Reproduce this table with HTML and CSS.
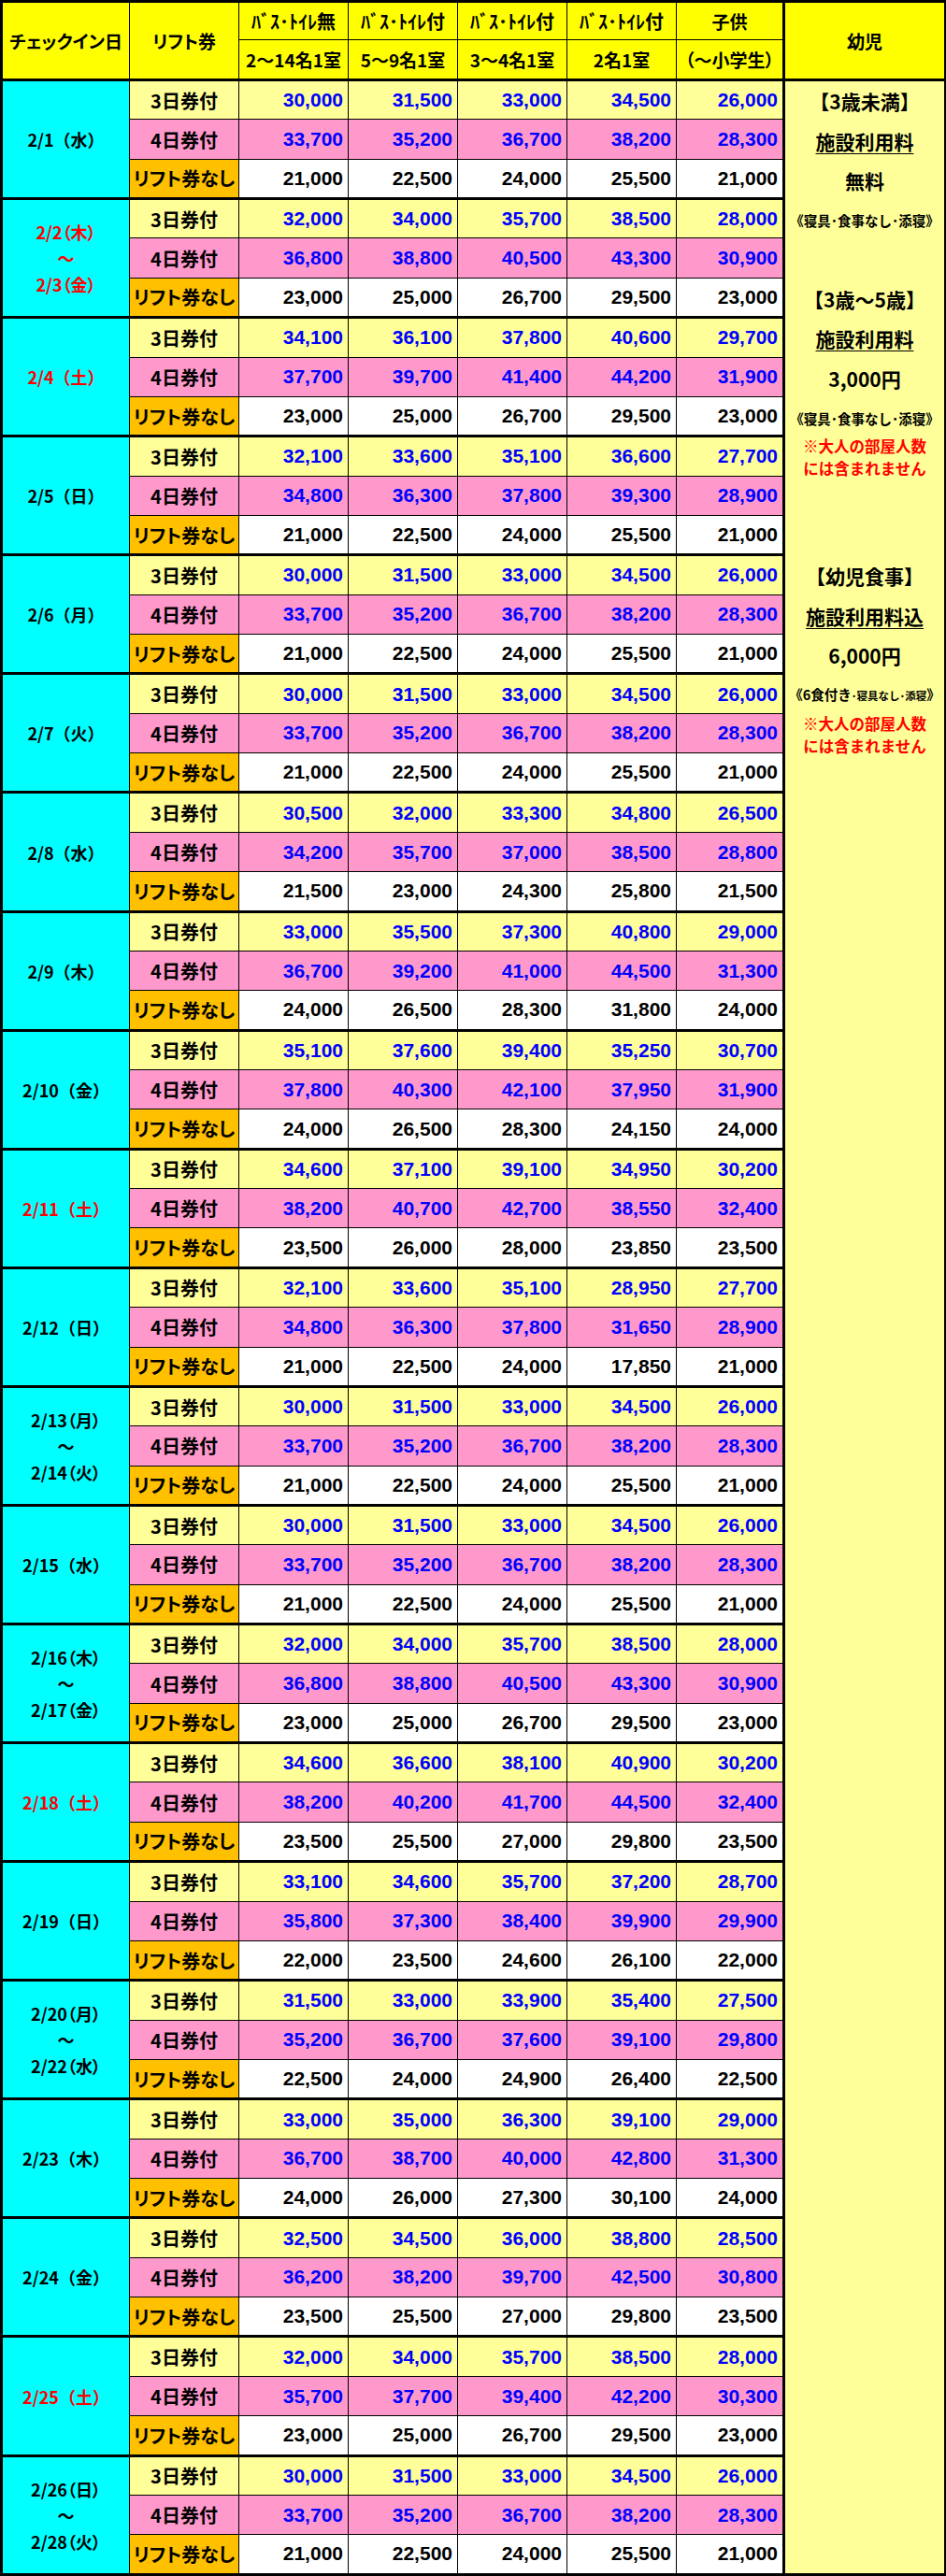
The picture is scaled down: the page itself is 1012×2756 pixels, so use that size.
FILE: index.html
```html
<!DOCTYPE html>
<html lang="ja">
<head>
<meta charset="utf-8">
<title>料金表</title>
<link rel="stylesheet" href="styles.css">
</head>
<body>
<table class="rates">
<colgroup>
<col class="c-date"><col class="c-lift"><col class="c-p"><col class="c-p"><col class="c-p"><col class="c-p"><col class="c-kid"><col class="c-inf">
</colgroup>
<thead>
<tr class="h1">
<th rowspan="2">チェックイン日</th>
<th rowspan="2">リフト券</th>
<th class="hw">ﾊﾞｽ･ﾄｲﾚ無</th>
<th class="hw">ﾊﾞｽ･ﾄｲﾚ付</th>
<th class="hw">ﾊﾞｽ･ﾄｲﾚ付</th>
<th class="hw">ﾊﾞｽ･ﾄｲﾚ付</th>
<th>子供</th>
<th rowspan="2" class="infant">幼児</th>
</tr>
<tr class="h2">
<th>2～14名1室</th>
<th>5～9名1室</th>
<th>3～4名1室</th>
<th>2名1室</th>
<th>（～小学生）</th>
</tr>
</thead>
<tbody>
<tr class="r3 gs"><td class="d" rowspan="3">2/1（水）</td><td class="l">3日券付</td><td class="n">30,000</td><td class="n">31,500</td><td class="n">33,000</td><td class="n">34,500</td><td class="n">26,000</td>
<td class="info" rowspan="63">
<div class="ln">【3歳未満】</div>
<div class="ln"><span class="u">施設利用料</span></div>
<div class="ln">無料</div>
<div class="ln sm">《寝具･食事なし･添寝》</div>
<div class="ln"></div>
<div class="ln">【3歳～5歳】</div>
<div class="ln"><span class="u">施設利用料</span></div>
<div class="ln">3,000円</div>
<div class="ln sm">《寝具･食事なし･添寝》</div>
<div class="ln note"><span>※大人の部屋人数</span><span>には含まれません</span></div>
<div class="ln"></div>
<div class="ln"></div>
<div class="ln">【幼児食事】</div>
<div class="ln"><span class="u">施設利用料込</span></div>
<div class="ln">6,000円</div>
<div class="ln sm2">《6食付き<small>･寝具なし･添寝</small>》</div>
<div class="ln note"><span>※大人の部屋人数</span><span>には含まれません</span></div>
</td></tr>
<tr class="r4"><td class="l">4日券付</td><td class="n">33,700</td><td class="n">35,200</td><td class="n">36,700</td><td class="n">38,200</td><td class="n">28,300</td></tr>
<tr class="rn"><td class="l">リフト券なし</td><td class="n">21,000</td><td class="n">22,500</td><td class="n">24,000</td><td class="n">25,500</td><td class="n">21,000</td></tr>

<tr class="r3 gs"><td class="d m red" rowspan="3"><span>2/2（木）</span><span>～</span><span>2/3（金）</span></td><td class="l">3日券付</td><td class="n">32,000</td><td class="n">34,000</td><td class="n">35,700</td><td class="n">38,500</td><td class="n">28,000</td></tr>
<tr class="r4"><td class="l">4日券付</td><td class="n">36,800</td><td class="n">38,800</td><td class="n">40,500</td><td class="n">43,300</td><td class="n">30,900</td></tr>
<tr class="rn"><td class="l">リフト券なし</td><td class="n">23,000</td><td class="n">25,000</td><td class="n">26,700</td><td class="n">29,500</td><td class="n">23,000</td></tr>

<tr class="r3 gs"><td class="d red" rowspan="3">2/4（土）</td><td class="l">3日券付</td><td class="n">34,100</td><td class="n">36,100</td><td class="n">37,800</td><td class="n">40,600</td><td class="n">29,700</td></tr>
<tr class="r4"><td class="l">4日券付</td><td class="n">37,700</td><td class="n">39,700</td><td class="n">41,400</td><td class="n">44,200</td><td class="n">31,900</td></tr>
<tr class="rn"><td class="l">リフト券なし</td><td class="n">23,000</td><td class="n">25,000</td><td class="n">26,700</td><td class="n">29,500</td><td class="n">23,000</td></tr>

<tr class="r3 gs"><td class="d" rowspan="3">2/5（日）</td><td class="l">3日券付</td><td class="n">32,100</td><td class="n">33,600</td><td class="n">35,100</td><td class="n">36,600</td><td class="n">27,700</td></tr>
<tr class="r4"><td class="l">4日券付</td><td class="n">34,800</td><td class="n">36,300</td><td class="n">37,800</td><td class="n">39,300</td><td class="n">28,900</td></tr>
<tr class="rn"><td class="l">リフト券なし</td><td class="n">21,000</td><td class="n">22,500</td><td class="n">24,000</td><td class="n">25,500</td><td class="n">21,000</td></tr>

<tr class="r3 gs"><td class="d" rowspan="3">2/6（月）</td><td class="l">3日券付</td><td class="n">30,000</td><td class="n">31,500</td><td class="n">33,000</td><td class="n">34,500</td><td class="n">26,000</td></tr>
<tr class="r4"><td class="l">4日券付</td><td class="n">33,700</td><td class="n">35,200</td><td class="n">36,700</td><td class="n">38,200</td><td class="n">28,300</td></tr>
<tr class="rn"><td class="l">リフト券なし</td><td class="n">21,000</td><td class="n">22,500</td><td class="n">24,000</td><td class="n">25,500</td><td class="n">21,000</td></tr>

<tr class="r3 gs"><td class="d" rowspan="3">2/7（火）</td><td class="l">3日券付</td><td class="n">30,000</td><td class="n">31,500</td><td class="n">33,000</td><td class="n">34,500</td><td class="n">26,000</td></tr>
<tr class="r4"><td class="l">4日券付</td><td class="n">33,700</td><td class="n">35,200</td><td class="n">36,700</td><td class="n">38,200</td><td class="n">28,300</td></tr>
<tr class="rn"><td class="l">リフト券なし</td><td class="n">21,000</td><td class="n">22,500</td><td class="n">24,000</td><td class="n">25,500</td><td class="n">21,000</td></tr>

<tr class="r3 gs"><td class="d" rowspan="3">2/8（水）</td><td class="l">3日券付</td><td class="n">30,500</td><td class="n">32,000</td><td class="n">33,300</td><td class="n">34,800</td><td class="n">26,500</td></tr>
<tr class="r4"><td class="l">4日券付</td><td class="n">34,200</td><td class="n">35,700</td><td class="n">37,000</td><td class="n">38,500</td><td class="n">28,800</td></tr>
<tr class="rn"><td class="l">リフト券なし</td><td class="n">21,500</td><td class="n">23,000</td><td class="n">24,300</td><td class="n">25,800</td><td class="n">21,500</td></tr>

<tr class="r3 gs"><td class="d" rowspan="3">2/9（木）</td><td class="l">3日券付</td><td class="n">33,000</td><td class="n">35,500</td><td class="n">37,300</td><td class="n">40,800</td><td class="n">29,000</td></tr>
<tr class="r4"><td class="l">4日券付</td><td class="n">36,700</td><td class="n">39,200</td><td class="n">41,000</td><td class="n">44,500</td><td class="n">31,300</td></tr>
<tr class="rn"><td class="l">リフト券なし</td><td class="n">24,000</td><td class="n">26,500</td><td class="n">28,300</td><td class="n">31,800</td><td class="n">24,000</td></tr>

<tr class="r3 gs"><td class="d" rowspan="3">2/10（金）</td><td class="l">3日券付</td><td class="n">35,100</td><td class="n">37,600</td><td class="n">39,400</td><td class="n">35,250</td><td class="n">30,700</td></tr>
<tr class="r4"><td class="l">4日券付</td><td class="n">37,800</td><td class="n">40,300</td><td class="n">42,100</td><td class="n">37,950</td><td class="n">31,900</td></tr>
<tr class="rn"><td class="l">リフト券なし</td><td class="n">24,000</td><td class="n">26,500</td><td class="n">28,300</td><td class="n">24,150</td><td class="n">24,000</td></tr>

<tr class="r3 gs"><td class="d red" rowspan="3">2/11（土）</td><td class="l">3日券付</td><td class="n">34,600</td><td class="n">37,100</td><td class="n">39,100</td><td class="n">34,950</td><td class="n">30,200</td></tr>
<tr class="r4"><td class="l">4日券付</td><td class="n">38,200</td><td class="n">40,700</td><td class="n">42,700</td><td class="n">38,550</td><td class="n">32,400</td></tr>
<tr class="rn"><td class="l">リフト券なし</td><td class="n">23,500</td><td class="n">26,000</td><td class="n">28,000</td><td class="n">23,850</td><td class="n">23,500</td></tr>

<tr class="r3 gs"><td class="d" rowspan="3">2/12（日）</td><td class="l">3日券付</td><td class="n">32,100</td><td class="n">33,600</td><td class="n">35,100</td><td class="n">28,950</td><td class="n">27,700</td></tr>
<tr class="r4"><td class="l">4日券付</td><td class="n">34,800</td><td class="n">36,300</td><td class="n">37,800</td><td class="n">31,650</td><td class="n">28,900</td></tr>
<tr class="rn"><td class="l">リフト券なし</td><td class="n">21,000</td><td class="n">22,500</td><td class="n">24,000</td><td class="n">17,850</td><td class="n">21,000</td></tr>

<tr class="r3 gs"><td class="d m" rowspan="3"><span>2/13（月）</span><span>～</span><span>2/14（火）</span></td><td class="l">3日券付</td><td class="n">30,000</td><td class="n">31,500</td><td class="n">33,000</td><td class="n">34,500</td><td class="n">26,000</td></tr>
<tr class="r4"><td class="l">4日券付</td><td class="n">33,700</td><td class="n">35,200</td><td class="n">36,700</td><td class="n">38,200</td><td class="n">28,300</td></tr>
<tr class="rn"><td class="l">リフト券なし</td><td class="n">21,000</td><td class="n">22,500</td><td class="n">24,000</td><td class="n">25,500</td><td class="n">21,000</td></tr>

<tr class="r3 gs"><td class="d" rowspan="3">2/15（水）</td><td class="l">3日券付</td><td class="n">30,000</td><td class="n">31,500</td><td class="n">33,000</td><td class="n">34,500</td><td class="n">26,000</td></tr>
<tr class="r4"><td class="l">4日券付</td><td class="n">33,700</td><td class="n">35,200</td><td class="n">36,700</td><td class="n">38,200</td><td class="n">28,300</td></tr>
<tr class="rn"><td class="l">リフト券なし</td><td class="n">21,000</td><td class="n">22,500</td><td class="n">24,000</td><td class="n">25,500</td><td class="n">21,000</td></tr>

<tr class="r3 gs"><td class="d m" rowspan="3"><span>2/16（木）</span><span>～</span><span>2/17（金）</span></td><td class="l">3日券付</td><td class="n">32,000</td><td class="n">34,000</td><td class="n">35,700</td><td class="n">38,500</td><td class="n">28,000</td></tr>
<tr class="r4"><td class="l">4日券付</td><td class="n">36,800</td><td class="n">38,800</td><td class="n">40,500</td><td class="n">43,300</td><td class="n">30,900</td></tr>
<tr class="rn"><td class="l">リフト券なし</td><td class="n">23,000</td><td class="n">25,000</td><td class="n">26,700</td><td class="n">29,500</td><td class="n">23,000</td></tr>

<tr class="r3 gs"><td class="d red" rowspan="3">2/18（土）</td><td class="l">3日券付</td><td class="n">34,600</td><td class="n">36,600</td><td class="n">38,100</td><td class="n">40,900</td><td class="n">30,200</td></tr>
<tr class="r4"><td class="l">4日券付</td><td class="n">38,200</td><td class="n">40,200</td><td class="n">41,700</td><td class="n">44,500</td><td class="n">32,400</td></tr>
<tr class="rn"><td class="l">リフト券なし</td><td class="n">23,500</td><td class="n">25,500</td><td class="n">27,000</td><td class="n">29,800</td><td class="n">23,500</td></tr>

<tr class="r3 gs"><td class="d" rowspan="3">2/19（日）</td><td class="l">3日券付</td><td class="n">33,100</td><td class="n">34,600</td><td class="n">35,700</td><td class="n">37,200</td><td class="n">28,700</td></tr>
<tr class="r4"><td class="l">4日券付</td><td class="n">35,800</td><td class="n">37,300</td><td class="n">38,400</td><td class="n">39,900</td><td class="n">29,900</td></tr>
<tr class="rn"><td class="l">リフト券なし</td><td class="n">22,000</td><td class="n">23,500</td><td class="n">24,600</td><td class="n">26,100</td><td class="n">22,000</td></tr>

<tr class="r3 gs"><td class="d m" rowspan="3"><span>2/20（月）</span><span>～</span><span>2/22（水）</span></td><td class="l">3日券付</td><td class="n">31,500</td><td class="n">33,000</td><td class="n">33,900</td><td class="n">35,400</td><td class="n">27,500</td></tr>
<tr class="r4"><td class="l">4日券付</td><td class="n">35,200</td><td class="n">36,700</td><td class="n">37,600</td><td class="n">39,100</td><td class="n">29,800</td></tr>
<tr class="rn"><td class="l">リフト券なし</td><td class="n">22,500</td><td class="n">24,000</td><td class="n">24,900</td><td class="n">26,400</td><td class="n">22,500</td></tr>

<tr class="r3 gs"><td class="d" rowspan="3">2/23（木）</td><td class="l">3日券付</td><td class="n">33,000</td><td class="n">35,000</td><td class="n">36,300</td><td class="n">39,100</td><td class="n">29,000</td></tr>
<tr class="r4"><td class="l">4日券付</td><td class="n">36,700</td><td class="n">38,700</td><td class="n">40,000</td><td class="n">42,800</td><td class="n">31,300</td></tr>
<tr class="rn"><td class="l">リフト券なし</td><td class="n">24,000</td><td class="n">26,000</td><td class="n">27,300</td><td class="n">30,100</td><td class="n">24,000</td></tr>

<tr class="r3 gs"><td class="d" rowspan="3">2/24（金）</td><td class="l">3日券付</td><td class="n">32,500</td><td class="n">34,500</td><td class="n">36,000</td><td class="n">38,800</td><td class="n">28,500</td></tr>
<tr class="r4"><td class="l">4日券付</td><td class="n">36,200</td><td class="n">38,200</td><td class="n">39,700</td><td class="n">42,500</td><td class="n">30,800</td></tr>
<tr class="rn"><td class="l">リフト券なし</td><td class="n">23,500</td><td class="n">25,500</td><td class="n">27,000</td><td class="n">29,800</td><td class="n">23,500</td></tr>

<tr class="r3 gs"><td class="d red" rowspan="3">2/25（土）</td><td class="l">3日券付</td><td class="n">32,000</td><td class="n">34,000</td><td class="n">35,700</td><td class="n">38,500</td><td class="n">28,000</td></tr>
<tr class="r4"><td class="l">4日券付</td><td class="n">35,700</td><td class="n">37,700</td><td class="n">39,400</td><td class="n">42,200</td><td class="n">30,300</td></tr>
<tr class="rn"><td class="l">リフト券なし</td><td class="n">23,000</td><td class="n">25,000</td><td class="n">26,700</td><td class="n">29,500</td><td class="n">23,000</td></tr>

<tr class="r3 gs"><td class="d m" rowspan="3"><span>2/26（日）</span><span>～</span><span>2/28（火）</span></td><td class="l">3日券付</td><td class="n">30,000</td><td class="n">31,500</td><td class="n">33,000</td><td class="n">34,500</td><td class="n">26,000</td></tr>
<tr class="r4"><td class="l">4日券付</td><td class="n">33,700</td><td class="n">35,200</td><td class="n">36,700</td><td class="n">38,200</td><td class="n">28,300</td></tr>
<tr class="rn"><td class="l">リフト券なし</td><td class="n">21,000</td><td class="n">22,500</td><td class="n">24,000</td><td class="n">25,500</td><td class="n">21,000</td></tr>
</tbody>
</table>
</body>
</html>
```
FILE: styles.css
```css
html, body {
  margin: 0;
  padding: 0;
  background: #ffffff;
}

.rates {
  border-collapse: collapse;
  table-layout: fixed;
  width: 1012px;
  border: 3px solid #000;
  font-family: "Noto Sans CJK JP", "Noto Sans", sans-serif;
  font-weight: 700;
  color: #000;
}

.c-date { width: 137px; }
.c-lift { width: 117px; }
.c-p { width: 117px; }
.c-kid { width: 115px; }
.c-inf { width: 173px; }

.rates th,
.rates td {
  border: 1px solid #000;
  padding: 0;
  box-sizing: border-box;
  text-align: center;
  vertical-align: middle;
}

.rates thead th {
  background: #ffff00;
  font-size: 19px;
  line-height: 1;
  font-feature-settings: "palt";
  white-space: nowrap;
}

.rates thead .h1 th { height: 41px; }
.rates thead .h2 th { height: 43px; border-bottom: 3px solid #000; }
.rates thead th.hw {
  font-size: 20px;
  font-feature-settings: normal;
}
.rates th.infant { border-left: 3px solid #000; border-bottom: 3px solid #000; }

.rates tbody td { height: 42.37px; }
.rates tbody tr.gs td { border-top: 3px solid #000; }

.rates td.d {
  background: #00ffff;
  font-size: 18px;
}
.rates td.d.m {
  line-height: 28px;
  font-feature-settings: "palt";
}
.rates td.d.m span { display: block; }
.rates td.red { color: #ff0000; }

.rates td.l {
  font-size: 20px;
  font-feature-settings: "palt";
  white-space: nowrap;
}

.rates td.n {
  font-family: "Liberation Sans", Arial, sans-serif;
  font-size: 21px;
  text-align: right;
  padding-right: 5px;
}

.r3 td.l, .r3 td.n { background: #ffff99; }
.r4 td.l, .r4 td.n { background: #ff99cc; }
.rn td.l { background: #ffc000; }
.rn td.n { background: #ffffff; color: #000; }
.r3 td.n, .r4 td.n { color: #0000ff; }

.rates td.info {
  background: #ffff99;
  vertical-align: top;
  border-left: 3px solid #000;
}

.info .ln {
  height: 42.37px;
  display: flex;
  flex-direction: column;
  align-items: center;
  justify-content: center;
  font-size: 21px;
  white-space: nowrap;
}

.info .u {
  text-decoration: underline;
  text-decoration-thickness: 1px;
  text-underline-offset: 4px;
}

.info .sm {
  font-size: 14.5px;
}

.info .sm2 {
  display: block;
  font-size: 14.5px;
  line-height: 42.37px;
  text-align: center;
}

.info .sm2 small { font-size: 11.5px; }

.info .note {
  color: #ff0000;
  font-size: 16.5px;
  line-height: 24px;
}
```
